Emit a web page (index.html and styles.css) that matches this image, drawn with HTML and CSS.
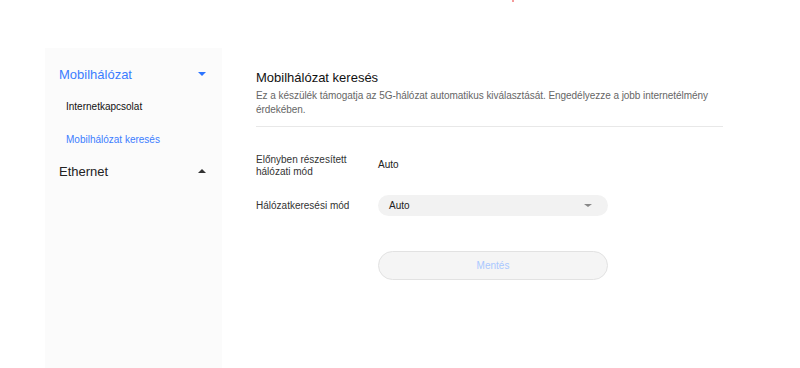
FILE: index.html
```html
<!DOCTYPE html>
<html lang="hu">
<head>
    <meta charset="UTF-8">
    <meta name="viewport" content="width=device-width, initial-scale=1.0">
    <title>Mobilhálózat keresés</title>
    <link rel="stylesheet" href="styles.css">
</head>
<body>
    <span class="top-dot"></span>
    <div class="page">
        <nav class="sidebar">
            <div class="menu-group">
                <div class="menu-title active">
                    <span>Mobilhálózat</span>
                    <span class="caret caret-down"></span>
                </div>
                <a class="menu-item">Internetkapcsolat</a>
                <a class="menu-item active">Mobilhálózat keresés</a>
            </div>
            <div class="menu-group">
                <div class="menu-title">
                    <span>Ethernet</span>
                    <span class="caret caret-up"></span>
                </div>
            </div>
        </nav>

        <main class="content">
            <h2 class="section-title">Mobilhálózat keresés</h2>
            <p class="section-desc">Ez a készülék támogatja az 5G-hálózat automatikus kiválasztását. Engedélyezze a jobb internetélmény érdekében.</p>
            <hr class="divider">

            <div class="form-row">
                <label class="form-label">Előnyben részesített hálózati mód</label>
                <span class="form-value">Auto</span>
            </div>
            <div class="form-row">
                <label class="form-label">Hálózatkeresési mód</label>
                <div class="select-box">
                    <span>Auto</span>
                    <span class="caret-small"></span>
                </div>
            </div>
            <div class="form-row">
                <span class="form-label"></span>
                <button class="save-button" disabled>Mentés</button>
            </div>
        </main>
    </div>
</body>
</html>
```

FILE: styles.css
```css
body {
    margin: 0;
    font-family: "Liberation Sans", Arial, sans-serif;
    background-color: #ffffff;
    color: #222;
    height: 368px;
    overflow: hidden;
}

.top-dot {
    position: absolute;
    top: 0;
    left: 512px;
    width: 2px;
    height: 2px;
    background-color: #f49a9a;
}

.page {
    display: flex;
    padding: 48px 0 0 45px;
}

/* left menu */
.sidebar {
    width: 177px;
    height: 320px;
    background-color: #fbfbfb;
    padding-top: 17px;
    box-sizing: border-box;
}

.menu-title {
    display: flex;
    justify-content: space-between;
    align-items: center;
    padding: 0 16px 0 14px;
    height: 18px;
    font-size: 13px;
    color: #222;
}

.menu-title.active {
    color: #3b7dff;
}

.menu-item {
    display: block;
    padding-left: 21px;
    font-size: 10px;
    color: #111;
    margin-top: 18px;
    line-height: 12px;
}

.menu-item + .menu-item {
    margin-top: 21px;
}

.menu-item.active {
    color: #3b7dff;
}

.menu-group + .menu-group {
    margin-top: 16px;
}

.caret {
    width: 0;
    height: 0;
    border-left: 4px solid transparent;
    border-right: 4px solid transparent;
}

.caret-down {
    border-top: 4px solid #2c74ff;
}

.caret-up {
    border-bottom: 4px solid #333;
}

/* right content */
.content {
    width: 467px;
    margin-left: 34px;
    padding-top: 22px;
}

.section-title {
    margin: 0;
    font-size: 13px;
    font-weight: normal;
    color: #111;
    line-height: 16px;
}

.section-desc {
    margin: 3px 0 0;
    font-size: 10px;
    line-height: 14px;
    color: #666;
    letter-spacing: -0.05px;
}

.divider {
    border: 0;
    border-top: 1px solid #e8e8e8;
    margin: 9px 0 0;
}

.form-row {
    display: flex;
    align-items: center;
}

.form-row:nth-of-type(1) {
    margin-top: 27px;
}

.form-row + .form-row {
    margin-top: 17px;
}

.form-row:last-child {
    margin-top: 35px;
}

.form-label {
    width: 122px;
    font-size: 10px;
    line-height: 12px;
    color: #333;
    padding-right: 10px;
    box-sizing: border-box;
}

.form-value {
    font-size: 10px;
    color: #222;
    margin-bottom: 4px;
}

.select-box {
    width: 230px;
    height: 21px;
    border-radius: 11px;
    background-color: #f2f2f2;
    display: flex;
    align-items: center;
    justify-content: space-between;
    padding: 0 16px 0 11px;
    box-sizing: border-box;
    font-size: 10px;
    color: #222;
}

.caret-small {
    width: 0;
    height: 0;
    border-left: 4px solid transparent;
    border-right: 4px solid transparent;
    border-top: 3px solid #888;
}

.save-button {
    width: 230px;
    height: 29px;
    border-radius: 15px;
    border: 1px solid #e2e2e2;
    background-color: #f5f5f5;
    color: #a9c8ff;
    font-family: "Liberation Sans", Arial, sans-serif;
    font-size: 10px;
}
```
